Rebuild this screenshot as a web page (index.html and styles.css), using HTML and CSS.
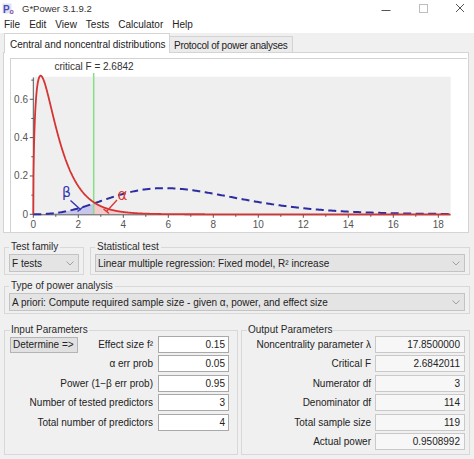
FILE: index.html
```html
<!DOCTYPE html>
<html lang="en">
<head>
<meta charset="utf-8">
<title>G*Power 3.1.9.2</title>
<link rel="stylesheet" href="styles.css">
</head>
<body>
<div class="titlebar">
  <svg class="app-icon" viewBox="0 0 14 13" aria-hidden="true">
    <rect x="0.5" y="1.5" width="9" height="10" fill="#dfe3f4"/>
    <text x="1" y="10.5" class="icon-p">P</text>
    <text x="7.5" y="12" class="icon-o">o</text>
  </svg>
  <span class="title">G*Power 3.1.9.2</span>
  <div class="controls">
    <svg class="ctrl" viewBox="0 0 14 14"><path d="M2.5 9.5h9" stroke="#555" stroke-width="1"/></svg>
    <svg class="ctrl" viewBox="0 0 14 14"><rect x="3.5" y="3.5" width="8" height="8" fill="none" stroke="#bdbdbd"/></svg>
    <svg class="ctrl" viewBox="0 0 14 14"><path d="M3 3l8 8M11 3l-8 8" stroke="#555" stroke-width="1"/></svg>
  </div>
</div>
<div class="menubar">
  <span>File</span><span>Edit</span><span>View</span><span>Tests</span><span>Calculator</span><span>Help</span>
</div>
<div class="tabs">
  <div class="tab active">Central and noncentral distributions</div>
  <div class="tab second">Protocol of power analyses</div>
</div>
<div class="plot-panel">
  <svg class="chart" width="464" height="179" viewBox="4 53 464 179">
    <line x1="10.5" y1="233" x2="10.5" y2="58.5" stroke="#d2d2d2"/>
    <line x1="10" y1="58.5" x2="467" y2="58.5" stroke="#d2d2d2"/>
    <rect x="33.3" y="76.7" width="417.4" height="137.6" fill="#efefef"/>
    <path id="beta-fill" fill="#b7b7ee" fill-opacity="0.7"/>
    <path id="alpha-fill" fill="#f5c2c2" fill-opacity="0.8"/>
    <text class="crit" x="94" y="70">critical F = 2.6842</text>
    <line x1="93.7" y1="73" x2="93.7" y2="214.3" stroke="#86e086" stroke-width="1.5"/>
    <g id="axes" stroke="#555" stroke-width="1"></g>
    <g id="labels" class="axis-label"></g>
    <path id="noncentral" fill="none" stroke="#2d2d9f" stroke-width="2" stroke-dasharray="8 4.5"/>
    <path id="central" fill="none" stroke="#d63434" stroke-width="1.8"/>
    <text class="greek beta" x="62" y="197">β</text>
    <path d="M70.5 200.5L81 210M77.5 211.5L83 207" stroke="#3434b0" stroke-width="1.4" fill="none"/>
    <text class="greek alpha" x="117.5" y="200">α</text>
    <path d="M117 200L106.5 211.5M103.5 209L109 213.5" stroke="#d83a3a" stroke-width="1.4" fill="none"/>
  </svg>
</div>
<div class="row">
  <fieldset class="group family">
    <legend>Test family</legend>
    <div class="select"><span>F tests</span><svg class="chev" viewBox="0 0 8 5"><path d="M0.5 0.5L4 4L7.5 0.5" fill="none" stroke="#a0a0a0"/></svg></div>
  </fieldset>
  <fieldset class="group stat">
    <legend>Statistical test</legend>
    <div class="select"><span>Linear multiple regression: Fixed model, R² increase</span><svg class="chev" viewBox="0 0 8 5"><path d="M0.5 0.5L4 4L7.5 0.5" fill="none" stroke="#a0a0a0"/></svg></div>
  </fieldset>
</div>
<fieldset class="group type">
  <legend>Type of power analysis</legend>
  <div class="select"><span>A priori: Compute required sample size - given α, power, and effect size</span><svg class="chev" viewBox="0 0 8 5"><path d="M0.5 0.5L4 4L7.5 0.5" fill="none" stroke="#a0a0a0"/></svg></div>
</fieldset>
<div class="params">
  <fieldset class="group input">
    <legend>Input Parameters</legend>
    <div class="grid in-grid">
      <div class="label first"><span class="btn">Determine =&gt;</span><span>Effect size f²</span></div>
      <div class="field">0.15</div>
      <div class="label">α err prob</div>
      <div class="field">0.05</div>
      <div class="label">Power (1−β err prob)</div>
      <div class="field">0.95</div>
      <div class="label">Number of tested predictors</div>
      <div class="field">3</div>
      <div class="label">Total number of predictors</div>
      <div class="field">4</div>
    </div>
  </fieldset>
  <fieldset class="group output">
    <legend>Output Parameters</legend>
    <div class="grid out-grid">
      <div class="label">Noncentrality parameter λ</div>
      <div class="field out">17.8500000</div>
      <div class="label">Critical F</div>
      <div class="field out">2.6842011</div>
      <div class="label">Numerator df</div>
      <div class="field out">3</div>
      <div class="label">Denominator df</div>
      <div class="field out">114</div>
      <div class="label">Total sample size</div>
      <div class="field out">119</div>
      <div class="label">Actual power</div>
      <div class="field out">0.9508992</div>
    </div>
  </fieldset>
</div>
<script src="script.js"></script>
</body>
</html>
```
FILE: styles.css
```css
* { box-sizing: border-box; }
html, body { margin: 0; padding: 0; }
body {
  width: 474px;
  height: 459px;
  overflow: hidden;
  background: #f0f0f0;
  font-family: "Liberation Sans", Arial, sans-serif;
  font-size: 10px;
  color: #1e1e1e;
}
.titlebar {
  height: 16px;
  background: #fff;
  display: flex;
  align-items: center;
}
.app-icon { width: 14px; height: 13px; margin-left: 2px; display: block; }
.icon-p { font: bold 10px "Liberation Sans", Arial, sans-serif; fill: #4b4bb5; }
.icon-o { font: bold 7px "Liberation Sans", Arial, sans-serif; fill: #8a4aa8; }
.title { margin-left: 6px; font-size: 9.5px; color: #333; }
.controls {
  margin-left: auto;
  display: flex;
  align-items: center;
  gap: 23px;
  padding-right: 7px;
}
.ctrl { width: 14px; height: 14px; display: block; }
.menubar {
  height: 17px;
  background: #fff;
  display: flex;
  align-items: center;
  gap: 9px;
  padding-left: 4px;
  color: #222;
}
.tabs {
  display: flex;
  align-items: flex-end;
  height: 19px;
  padding-left: 4px;
}
.tab {
  height: 16px;
  padding: 1px 4px 0 4px;
  border: 1px solid #d4d4d4;
  border-bottom: none;
  border-left: none;
  background: #ebebeb;
  display: flex;
  align-items: center;
  color: #222;
  white-space: nowrap;
}
.tab.second { letter-spacing: -0.25px; }
.tab.active {
  position: relative;
  z-index: 1;
  height: 20px;
  margin-bottom: -1px;
  width: 166px;
  padding: 1px 0 0 5px;
  background: #fff;
  border-left: 1px solid #d4d4d4;
  letter-spacing: -0.05px;
}
.plot-panel {
  margin: 0 5px 0 3px;
  height: 181px;
  background: #fff;
  border: 1px solid #d4d4d4;
}
.chart { display: block; }
.crit { font: 10px "Liberation Sans", Arial, sans-serif; fill: #333; text-anchor: middle; }
.axis-label text { font: 10px "Liberation Sans", Arial, sans-serif; fill: #555; }
.greek { font: 14px "DejaVu Sans", "Liberation Sans", sans-serif; }
.beta { fill: #3535b3; font-size: 14px; }
.alpha { fill: #d83a3a; font-size: 15px; }

.row {
  display: flex;
  gap: 6px;
  padding: 0 4px;
  margin-top: 8px;
}
.group {
  margin: 0;
  padding: 0 4px 2px 4px;
  border: 1px solid #d8d8d8;
  min-width: 0;
}
.group legend {
  padding: 0 2px;
  line-height: 12px;
  color: #2a2a2a;
}
.family { width: 80px; flex: none; }
.stat { flex: 1; }
.type { margin: 5px 4px 0 4px; }
.select {
  height: 18px;
  margin-top: 1px;
  background: #e4e4e4;
  border: 1px solid #c3c3c3;
  display: flex;
  align-items: center;
  padding-left: 2px;
  color: #222;
  white-space: nowrap;
}
.chev { width: 8px; height: 5px; margin-left: auto; margin-right: 4px; flex: none; }

.params {
  display: flex;
  gap: 3px;
  padding: 0 4px;
  margin-top: 10px;
}
.input { width: 234px; flex: none; padding: 0 8px 4px 5px; }
.output { flex: 1; padding: 0 4px 4px 5px; }
.input legend, .output legend { padding: 0 1px; }
.grid {
  display: grid;
  column-gap: 5px;
  row-gap: 2.4px;
  grid-auto-rows: 17px;
}
.in-grid { grid-template-columns: 1fr 71px; }
.out-grid { grid-template-columns: 1fr 90px; column-gap: 4px; }
.label {
  text-align: right;
  line-height: 17px;
  white-space: nowrap;
  color: #222;
}
.label.first {
  display: flex;
  justify-content: space-between;
  align-items: center;
}
.btn {
  width: 68px;
  height: 16px;
  line-height: 14px;
  text-align: left;
  padding-left: 2px;
  background: #e1e1e1;
  border: 1px solid #b4b4b4;
}
.field {
  height: 17px;
  line-height: 15px;
  text-align: right;
  padding-right: 3px;
  background: #fff;
  border: 1px solid #a9a9a9;
  color: #222;
}
.field.out {
  background: #f7f7f7;
  border-color: #c9c9c9;
  padding-right: 4px;
}
```
FILE: script.js
```js
(function () {
  var NS = "http://www.w3.org/2000/svg";
  var G = [0.99999999999980993, 676.5203681218851, -1259.1392167224028, 771.32342877765313,
    -176.61502916214059, 12.507343278686905, -0.13857109526572012, 9.9843695780195716e-6,
    1.5056327351493116e-7];
  function lgamma(z) {
    if (z < 0.5) return Math.log(Math.PI / Math.sin(Math.PI * z)) - lgamma(1 - z);
    z -= 1;
    var x = G[0];
    for (var i = 1; i < 9; i++) x += G[i] / (z + i);
    var t = z + 7.5;
    return 0.5 * Math.log(2 * Math.PI) + (z + 0.5) * Math.log(t) - t + Math.log(x);
  }
  var d1 = 3, d2 = 114, lam = 17.85, crit = 2.6842;
  function fpdf(x, a, b) {
    if (x <= 0) return 0;
    var l = (a / 2) * Math.log(a / b) + (a / 2 - 1) * Math.log(x) -
      ((a + b) / 2) * Math.log(1 + a * x / b) -
      (lgamma(a / 2) + lgamma(b / 2) - lgamma((a + b) / 2));
    return Math.exp(l);
  }
  function central(x) { return fpdf(x, d1, d2); }
  function noncentral(x) {
    if (x <= 0) return 0;
    var h = lam / 2, s = 0;
    for (var k = 0; k < 90; k++) {
      var lw = -h + k * Math.log(h) - lgamma(k + 1);
      var a = d1 + 2 * k;
      s += Math.exp(lw) * (d1 / a) * fpdf(x * d1 / a, a, d2);
    }
    return s;
  }
  var X0 = 33.3, SX = 22.5, Y0 = 214.3, SY = 191.7, XMAX = 18.53;
  function px(x) { return (X0 + x * SX).toFixed(2); }
  function py(y) { return (Y0 - y * SY).toFixed(2); }
  function pts(f, a, b, step) {
    var out = [];
    for (var x = a; x < b; x += step) out.push(px(x) + " " + py(f(x)));
    out.push(px(b) + " " + py(f(b)));
    return out;
  }
  document.getElementById("central").setAttribute("d", "M" + pts(central, 0, XMAX, 0.01).join("L"));
  document.getElementById("noncentral").setAttribute("d", "M" + pts(noncentral, 0, XMAX, 0.05).join("L"));
  document.getElementById("alpha-fill").setAttribute("d",
    "M" + px(crit) + " " + Y0 + "L" + pts(central, crit, XMAX, 0.02).join("L") + "L" + px(XMAX) + " " + Y0 + "Z");
  document.getElementById("beta-fill").setAttribute("d",
    "M" + px(0) + " " + Y0 + "L" + pts(noncentral, 0, crit, 0.02).join("L") + "L" + px(crit) + " " + Y0 + "Z");

  var axes = document.getElementById("axes");
  var labels = document.getElementById("labels");
  function line(x1, y1, x2, y2) {
    var l = document.createElementNS(NS, "line");
    l.setAttribute("x1", x1); l.setAttribute("y1", y1);
    l.setAttribute("x2", x2); l.setAttribute("y2", y2);
    axes.appendChild(l);
  }
  function text(x, y, s, anchor) {
    var t = document.createElementNS(NS, "text");
    t.setAttribute("x", x); t.setAttribute("y", y);
    t.setAttribute("text-anchor", anchor);
    t.textContent = s;
    labels.appendChild(t);
  }
  line(X0, 77.5, X0, Y0 + 0.5);
  line(X0, Y0 + 0.5, 450.7, Y0 + 0.5);
  for (var i = 0; i <= 7; i++) {
    var y = Y0 - i * 0.1 * SY;
    var major = i % 2 === 0;
    line(major ? X0 - 3.5 : X0 - 2, y, X0, y);
    if (major) text(28, y + 3.5, i === 0 ? "0" : (i / 10).toFixed(1), "end");
  }
  for (var j = 0; j <= 18; j++) {
    var x = X0 + j * SX;
    var maj = j % 2 === 0;
    line(x, Y0 + 0.5, x, Y0 + (maj ? 3.5 : 2.5));
    if (maj) text(x, 227.5, String(j), "middle");
  }
})();
```
